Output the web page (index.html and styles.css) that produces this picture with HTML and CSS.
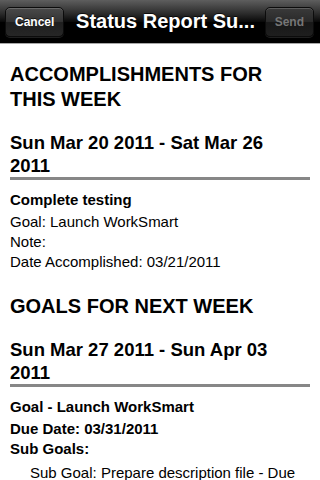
FILE: index.html
```html
<!DOCTYPE html>
<html>
<head>
<meta charset="utf-8">
<title>Status Report Summary</title>
<link rel="stylesheet" href="styles.css">
</head>
<body>
<header class="navbar">
  <button class="nav-btn">Cancel</button>
  <h1 class="nav-title">Status Report Su...</h1>
  <button class="nav-btn nav-btn-disabled">Send</button>
</header>
<main class="content">
  <section class="section">
    <h2 class="section-title">ACCOMPLISHMENTS FOR THIS WEEK</h2>
    <h3 class="date-range">Sun Mar 20 2011 - Sat Mar 26 2011</h3>
    <div class="item">
      <div class="item-title">Complete testing</div>
      <div class="line">Goal: Launch WorkSmart</div>
      <div class="line">Note:</div>
      <div class="line">Date Accomplished: 03/21/2011</div>
    </div>
  </section>
  <section class="section">
    <h2 class="section-title">GOALS FOR NEXT WEEK</h2>
    <h3 class="date-range">Sun Mar 27 2011 - Sun Apr 03 2011</h3>
    <div class="item">
      <div class="item-title">Goal - Launch WorkSmart</div>
      <div class="line bold">Due Date: 03/31/2011</div>
      <div class="line bold">Sub Goals:</div>
      <div class="sub-goal">Sub Goal: Prepare description file - Due Date: 03/31/2011</div>
    </div>
  </section>
</main>
</body>
</html>
```
FILE: styles.css
```css
html, body {
  margin: 0;
  padding: 0;
  background: #fff;
}
body {
  width: 320px;
  height: 480px;
  overflow: hidden;
  font-family: "Liberation Sans", Arial, Helvetica, sans-serif;
  color: #000;
}
.navbar {
  height: 43px;
  border-bottom: 1px solid #a8a8a8;
  background: linear-gradient(to bottom, #5e5e5e 0%, #2e2e2e 30%, #0a0a0a 50%, #000 52%, #000 100%);
  display: flex;
  align-items: center;
  padding: 0 6px 0 5px;
  box-sizing: content-box;
}
.nav-btn {
  height: 30px;
  margin: 0;
  padding: 0 9px;
  border: 1px solid #0c0c0c;
  border-radius: 5px;
  background: linear-gradient(to bottom, #4a4a4a 0%, #333 48%, #1f1f1f 52%, #262626 100%);
  box-shadow: inset 0 1px 0 rgba(255,255,255,0.18), 0 1px 0 rgba(255,255,255,0.12);
  color: #fff;
  font-family: "Liberation Sans", Arial, sans-serif;
  font-weight: bold;
  font-size: 12px;
  text-shadow: 0 -1px 0 rgba(0,0,0,0.6);
  flex: none;
}
.nav-btn-disabled {
  color: #767676;
  background: linear-gradient(to bottom, #3a3a3a 0%, #2a2a2a 48%, #181818 52%, #1e1e1e 100%);
  text-shadow: none;
}
.nav-title {
  flex: 1;
  margin: 0;
  text-align: center;
  color: #fff;
  font-size: 20px;
  font-weight: bold;
  white-space: nowrap;
  overflow: hidden;
  text-shadow: 0 -1px 0 rgba(0,0,0,0.7);
  padding-left: 2px;
  padding-bottom: 1px;
}
.content {
  padding: 18px 10px 0 10px;
}
.section + .section {
  margin-top: 22px;
}
.section-title {
  margin: 0;
  font-size: 20px;
  line-height: 25px;
  font-weight: bold;
}
.date-range {
  margin: 19px 0 0 0;
  padding-right: 12px;
  font-size: 18.5px;
  line-height: 23px;
  font-weight: bold;
  border-bottom: 3px solid #878787;
}
.item {
  margin-top: 10px;
  font-size: 15px;
  line-height: 20px;
}
.item-title {
  font-weight: bold;
  margin-bottom: 2px;
}
.line.bold {
  font-weight: bold;
}
.sub-goal {
  margin-top: 4px;
  padding-left: 20px;
}
```
